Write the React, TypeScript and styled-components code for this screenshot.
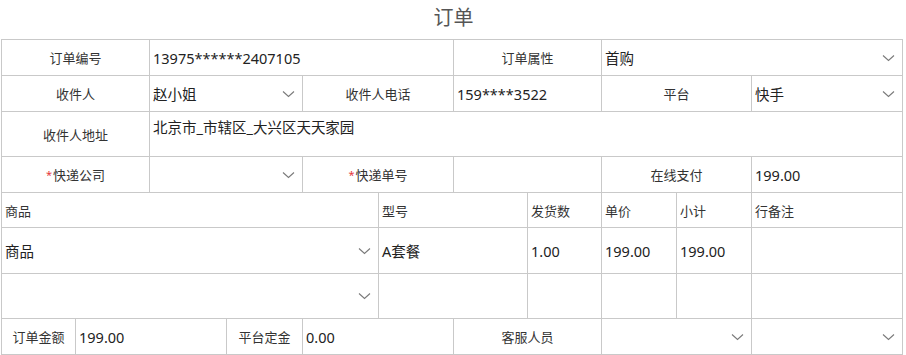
import styled, { createGlobalStyle } from "styled-components";

const BORDER = "#c9c9c9";

const GlobalStyle = createGlobalStyle`
    html, body {
        margin: 0;
        padding: 0;
        background: #ffffff;
    }
    body {
        font-family: "Noto Sans", "Noto Sans CJK SC", sans-serif;
        color: #222;
    }
`;

const Page = styled.div`
    width: 906px;
    padding-left: 1px;
    box-sizing: border-box;
`;

const Title = styled.h1`
    margin: 0;
    height: 39px;
    line-height: 36px;
    text-align: center;
    font-size: 20px;
    font-weight: 400;
    color: #555;
`;

const Table = styled.div`
    width: 902px;
    border-top: 1px solid ${BORDER};
    border-left: 1px solid ${BORDER};
    box-sizing: border-box;
`;

const Row = styled.div<{ $cols: string; $h: number }>`
    display: grid;
    grid-template-columns: ${(p) => p.$cols};
    height: ${(p) => p.$h}px;
`;

const Cell = styled.div`
    box-sizing: border-box;
    border-right: 1px solid ${BORDER};
    border-bottom: 1px solid ${BORDER};
    display: flex;
    align-items: center;
    min-width: 0;
    position: relative;
`;

const Label = styled(Cell)`
    justify-content: center;
    font-size: 13px;
    color: #333;
`;

const Value = styled(Cell)<{ $top?: boolean }>`
    padding-left: 3px;
    font-size: 14.5px;
    color: #222;
    align-items: ${(p) => (p.$top ? "flex-start" : "center")};
    padding-top: ${(p) => (p.$top ? "4px" : "0")};
`;

const HeadCell = styled(Cell)`
    padding-left: 3px;
    font-size: 13px;
    color: #333;
`;

const Req = styled.span`
    color: #e5393b;
    font-size: 11px;
    margin-right: 1px;
`;

const Chevron = styled.svg`
    position: absolute;
    right: 7px;
    top: 50%;
    margin-top: -4px;
    width: 13px;
    height: 8px;
`;

const Arrow = () => (
    <Chevron viewBox="0 0 13 8">
        <path d="M1 1.5 L6.5 6.5 L12 1.5" fill="none" stroke="#7a7a7a" strokeWidth="1.1" />
    </Chevron>
);

const Select = ({ children }: { children?: any }) => (
    <Value>
        {children}
        <Arrow />
    </Value>
);

export default function App() {
    return (
        <Page>
            <GlobalStyle />
            <Title>订单</Title>
            <Table>
                <Row $cols="148px 304px 148px 301px" $h={36}>
                    <Label>订单编号</Label>
                    <Value>13975******2407105</Value>
                    <Label>订单属性</Label>
                    <Select>首购</Select>
                </Row>
                <Row $cols="148px 153px 151px 148px 150px 151px" $h={36}>
                    <Label>收件人</Label>
                    <Select>赵小姐</Select>
                    <Label>收件人电话</Label>
                    <Value>159****3522</Value>
                    <Label>平台</Label>
                    <Select>快手</Select>
                </Row>
                <Row $cols="148px 753px" $h={45}>
                    <Label>收件人地址</Label>
                    <Value $top>北京市_市辖区_大兴区天天家园</Value>
                </Row>
                <Row $cols="148px 153px 151px 148px 150px 151px" $h={36}>
                    <Label>
                        <Req>*</Req>快递公司
                    </Label>
                    <Select />
                    <Label>
                        <Req>*</Req>快递单号
                    </Label>
                    <Value />
                    <Label>在线支付</Label>
                    <Value>199.00</Value>
                </Row>
                <Row $cols="377px 149px 74px 75px 75px 151px" $h={35}>
                    <HeadCell>商品</HeadCell>
                    <HeadCell>型号</HeadCell>
                    <HeadCell>发货数</HeadCell>
                    <HeadCell>单价</HeadCell>
                    <HeadCell>小计</HeadCell>
                    <HeadCell>行备注</HeadCell>
                </Row>
                <Row $cols="377px 149px 74px 75px 75px 151px" $h={46}>
                    <Select>商品</Select>
                    <Value>A套餐</Value>
                    <Value>1.00</Value>
                    <Value>199.00</Value>
                    <Value>199.00</Value>
                    <Value />
                </Row>
                <Row $cols="377px 149px 74px 75px 75px 151px" $h={45}>
                    <Select />
                    <Value />
                    <Value />
                    <Value />
                    <Value />
                    <Value />
                </Row>
                <Row $cols="74px 151px 76px 151px 148px 150px 151px" $h={36}>
                    <Label>订单金额</Label>
                    <Value>199.00</Value>
                    <Label>平台定金</Label>
                    <Value>0.00</Value>
                    <Label>客服人员</Label>
                    <Select />
                    <Select />
                </Row>
            </Table>
        </Page>
    );
}
